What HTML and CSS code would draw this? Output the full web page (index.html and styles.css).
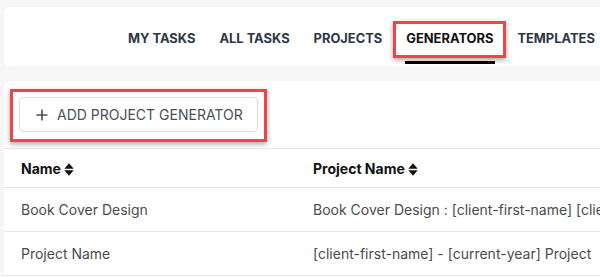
FILE: index.html
```html
<!DOCTYPE html>
<html>
<head>
<meta charset="utf-8">
<link rel="stylesheet" href="styles.css">
</head>
<body>
<div class="page">
  <div class="card nav-card">
    <nav class="tabs">
      <a class="tab">MY TASKS</a>
      <a class="tab">ALL TASKS</a>
      <a class="tab">PROJECTS</a>
      <a class="tab active">GENERATORS<span class="hl hl-tab"></span></a>
      <a class="tab">TEMPLATES</a>
    </nav>
  </div>
  <div class="card list-card">
    <div class="toolbar">
      <button class="add-btn"><svg class="plus" width="12" height="12" viewBox="0 0 12 12"><path d="M6 0.5v11M0.5 6h11" stroke="#4a4f57" stroke-width="1.6" fill="none"/></svg>ADD PROJECT GENERATOR<span class="hl hl-btn"></span></button>
    </div>
    <table class="grid">
      <colgroup><col class="c1"><col class="c2"></colgroup>
      <thead>
        <tr>
          <th>Name <svg class="sort" width="10" height="13" viewBox="0 0 10 13"><path d="M5 0.3L9.7 5.7H0.3Z M5 12.7L9.7 7.3H0.3Z" fill="#111"/></svg></th>
          <th>Project Name <svg class="sort" width="10" height="13" viewBox="0 0 10 13"><path d="M5 0.3L9.7 5.7H0.3Z M5 12.7L9.7 7.3H0.3Z" fill="#111"/></svg></th>
        </tr>
      </thead>
      <tbody>
        <tr>
          <td>Book Cover Design</td>
          <td>Book Cover Design : [client-first-name] [client-last-name]</td>
        </tr>
        <tr>
          <td>Project Name</td>
          <td>[client-first-name] - [current-year] Project</td>
        </tr>
      </tbody>
    </table>
  </div>
</div>
</body>
</html>
```

FILE: styles.css
```css
html, body {
  margin: 0;
  padding: 0;
  background: #f6f6f6;
  overflow: hidden;
  width: 600px;
  height: 277px;
}
.page {
  padding: 7px 0 0 4px;
  font-family: Inter, "Noto Sans", sans-serif;
}
.card {
  background: #fff;
  border-radius: 6px;
  width: 640px;
}
.nav-card {
  height: 59px;
}
.tabs {
  display: flex;
  height: 100%;
  padding-left: 112px;
}
.tab {
  position: relative;
  display: flex;
  align-items: center;
  padding: 4px 12px 0;
  font-size: 12.9px;
  font-weight: 700;
  color: #2d3645;
  white-space: nowrap;
}
.tab.active {
  color: #111;
}
.tab.active::after {
  content: "";
  position: absolute;
  left: 11px;
  right: 10px;
  bottom: 2px;
  height: 3px;
  background: #000;
}
.hl {
  position: absolute;
  border: 3px solid #f0444a;
  box-shadow: 0 2px 5px rgba(0,0,0,0.35);
  pointer-events: none;
}
.hl-tab {
  left: -1px;
  right: -1px;
  top: 14px;
  height: 31px;
}
.list-card {
  margin-top: 15px;
  height: 220px;
}
.toolbar {
  padding: 16px 15px;
  border-bottom: 1px solid #e8e8e8;
}
.add-btn {
  position: relative;
  display: flex;
  align-items: center;
  gap: 9px;
  width: 239px;
  height: 35px;
  padding: 0 0 0 16px;
  background: #fff;
  border: 1px solid #dcdcdc;
  border-radius: 4px;
  font-family: Inter, "Noto Sans", sans-serif;
  font-size: 14px;
  font-weight: 400;
  color: #4a4f57;
  white-space: nowrap;
}
.plus {
  flex: none;
}
.hl-btn {
  left: -10px;
  right: -10px;
  top: -9px;
  bottom: -11px;
}
.grid {
  border-collapse: collapse;
  table-layout: fixed;
  width: 640px;
  font-size: 14px;
}
.c1 {
  width: 292px;
}
.c2 {
  width: 348px;
}
.grid th {
  text-align: left;
  font-weight: 700;
  color: #111;
  height: 38px;
  padding: 0 0 0 17px;
  border-bottom: 1px solid #e8e8e8;
  white-space: nowrap;
}
.grid td {
  height: 43px;
  padding: 0 0 0 17px;
  color: #4b4b4b;
  border-bottom: 1px solid #e8e8e8;
  white-space: nowrap;
  overflow: hidden;
}
.sort {
  vertical-align: -2px;
  margin-left: 0;
}
```
